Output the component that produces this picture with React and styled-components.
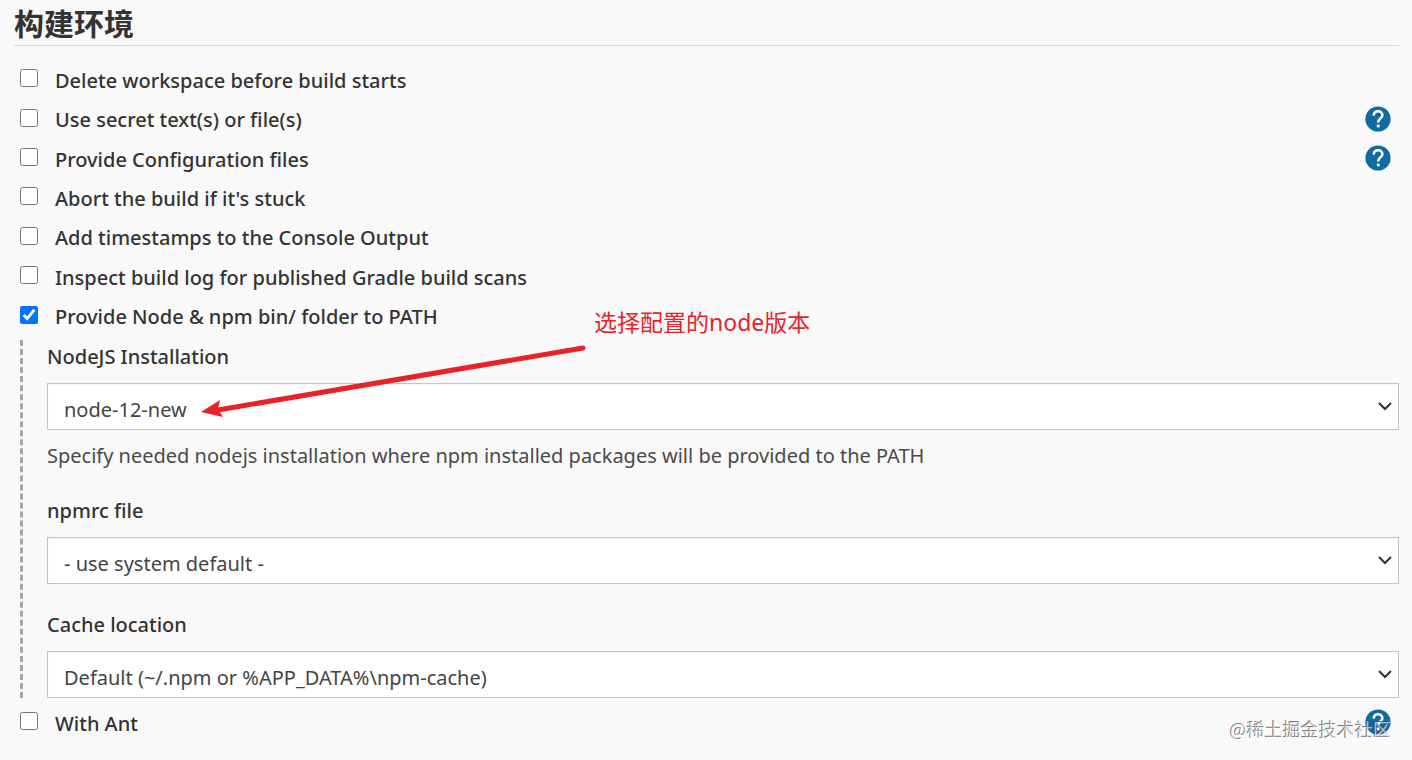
import React from "react";
import styled, { createGlobalStyle } from "styled-components";

const GlobalStyle = createGlobalStyle`
  * {
    box-sizing: border-box;
  }
  body {
    margin: 0;
    background: #f9f9f9;
    color: #333;
    font-family: "Noto Sans", "Noto Sans CJK SC", sans-serif;
    font-size: 20px;
  }
`;

const Page = styled.form`
  position: relative;
  padding: 4px 13px 16px 14px;
`;

const SectionTitle = styled.h1`
  margin: 0 0 15px;
  height: 42px;
  border-bottom: 1px solid #d9dadb;
  font-family: "Noto Sans CJK SC", sans-serif;
  font-size: 30px;
  font-weight: 700;
  line-height: 36px;
`;

const OptionList = styled.div`
  display: grid;
  grid-auto-rows: 1fr;
  min-height: ${(props) => props.$minHeight}px;
`;

const OptionRow = styled.div`
  display: flex;
  align-items: center;
  padding: 0 8px 0 6px;
`;

const Checkbox = styled.input`
  width: 18px;
  height: 18px;
  margin: 0 17px 5px 0;
`;

const OptionLabel = styled.label`
  flex: 1;
  font-weight: 500;
  line-height: 28px;
`;

const HelpLink = styled.a`
  display: flex;
  margin-bottom: 3px;
`;

const Nested = styled.div`
  display: flex;
  flex-direction: column;
  gap: 24px;
  margin: 3px 0 5px 6px;
  padding-left: 24px;
  border-left: 3px dashed #a6a6a6;
`;

const Field = styled.div`
  display: flex;
  flex-direction: column;
`;

const FieldLabel = styled.label`
  margin-bottom: 9px;
  font-weight: 500;
  line-height: 34px;
`;

const SelectBox = styled.div`
  position: relative;
`;

const Select = styled.select`
  display: block;
  appearance: none;
  width: 100%;
  height: 47px;
  padding: 6px 40px 0 16px;
  border: 1px solid #c3c5c6;
  border-radius: 0;
  background: #fff;
  box-shadow: inset 0 1px 2px rgba(0, 0, 0, 0.05);
  color: #444;
  font: inherit;
`;

const Chevron = styled.svg`
  position: absolute;
  top: 18px;
  right: 7px;
  pointer-events: none;
`;

const FieldHelp = styled.p`
  margin: 12px 0 0;
  color: #4a4a4a;
  line-height: 28px;
`;

const Note = styled.div`
  position: absolute;
  top: -78px;
  left: 547px;
  color: #e8212a;
  font-family: "Noto Sans", "Noto Sans CJK SC", sans-serif;
  font-size: 23px;
  line-height: 34px;
  white-space: nowrap;
`;

const Arrow = styled.svg`
  position: absolute;
  top: -43px;
  left: 147px;
  pointer-events: none;
`;

const Watermark = styled.div`
  position: absolute;
  right: 21px;
  bottom: 17px;
  color: rgba(255, 255, 255, 0.6);
  font-family: "Noto Sans CJK SC", sans-serif;
  font-size: 18px;
  font-weight: 400;
  line-height: 27px;
  text-shadow: -1px -1px 0 rgba(80, 80, 80, 0.75);
  pointer-events: none;
`;

const options = [
  { id: "cleanup", label: "Delete workspace before build starts" },
  { id: "secret", label: "Use secret text(s) or file(s)", help: true },
  { id: "config", label: "Provide Configuration files", help: true },
  { id: "abort", label: "Abort the build if it's stuck" },
  { id: "timestamps", label: "Add timestamps to the Console Output" },
  { id: "gradle", label: "Inspect build log for published Gradle build scans" },
  { id: "node", label: "Provide Node & npm bin/ folder to PATH", checked: true },
];

const Option = ({ id, label, help, checked }) => (
  <OptionRow>
    <Checkbox type="checkbox" id={id} defaultChecked={checked} />
    <OptionLabel htmlFor={id}>{label}</OptionLabel>
    {help && (
      <HelpLink href="#" aria-label={`Help: ${label}`}>
        <svg width="26" height="26" viewBox="0 0 26 26" fill="none">
          <circle cx="13" cy="13" r="12.6" fill="#116ba3" />
          <path
            d="M8.7 9.6C8.8 7 10.6 5.3 13.1 5.3C15.6 5.3 17.4 7 17.4 9.2C17.4 12 13.2 12.6 13.2 16.4"
            stroke="#fff"
            strokeWidth="2.5"
          />
          <rect x="11.9" y="18.6" width="2.7" height="2.7" fill="#fff" />
        </svg>
      </HelpLink>
    )}
  </OptionRow>
);

const SelectField = ({ id, label, value, help, children }) => (
  <Field>
    <FieldLabel htmlFor={id}>{label}</FieldLabel>
    <SelectBox>
      <Select id={id}>
        <option>{value}</option>
      </Select>
      <Chevron width="14" height="11" viewBox="0 0 14 11" fill="none">
        <path d="M1 2L7 8L13 2" stroke="#333" strokeWidth="2" />
      </Chevron>
      {children}
    </SelectBox>
    {help && <FieldHelp>{help}</FieldHelp>}
  </Field>
);

const App = () => {
  return (
    <>
      <GlobalStyle />
      <Page>
        <SectionTitle>构建环境</SectionTitle>
        <OptionList $minHeight={276}>
          {options.map((option) => (
            <Option key={option.id} {...option} />
          ))}
        </OptionList>
        <Nested>
          <SelectField
            id="installation"
            label="NodeJS Installation"
            value="node-12-new"
            help="Specify needed nodejs installation where npm installed packages will be provided to the PATH"
          >
            <Note>选择配置的node版本</Note>
            <Arrow width="400" height="90" viewBox="0 0 400 90">
              <path
                d="M389 8L24 70"
                stroke="#e8212a"
                strokeWidth="5"
                strokeLinecap="round"
              />
              <path d="M7 72L26 60L24 69L29 77Z" fill="#e8212a" />
            </Arrow>
          </SelectField>
          <SelectField id="npmrc" label="npmrc file" value="- use system default -" />
          <SelectField
            id="cache"
            label="Cache location"
            value="Default (~/.npm or %APP_DATA%\npm-cache)"
          />
        </Nested>
        <OptionList $minHeight={41}>
          <Option id="ant" label="With Ant" help />
        </OptionList>
        <Watermark>@稀土掘金技术社区</Watermark>
      </Page>
    </>
  );
};

export default App;
